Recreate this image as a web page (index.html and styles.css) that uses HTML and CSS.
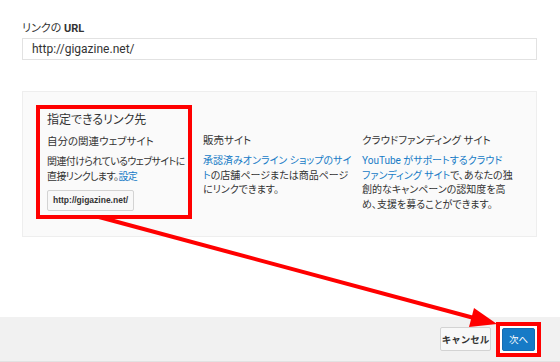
FILE: index.html
```html
<!DOCTYPE html>
<html lang="ja">
<head>
    <meta charset="UTF-8">
    <meta name="viewport" content="width=device-width, initial-scale=1.0">
    <title>リンクの URL</title>
    <link rel="stylesheet" href="styles.css">
</head>
<body>
    <div class="content">
        <div class="field-label">リンクの <strong>URL</strong></div>
        <div class="url-input">http://gigazine.net/</div>

        <!-- Link targets -->
        <div class="panel">
            <div class="option col-highlight">
                <div class="options-title">指定できるリンク先</div>
                <div class="option-name">自分の関連ウェブサイト</div>
                <div class="option-desc">関連付けられているウェブサイトに<br>直接リンクします。<a href="#">設定</a></div>
                <span class="url-chip">http://gigazine.net/</span>
            </div>
            <div class="option col-plain">
                <div class="option-name">販売サイト</div>
                <div class="option-desc"><a href="#">承認済みオンライン ショップのサイ<br>ト</a>の店舗ページまたは商品ページ<br>にリンクできます。</div>
            </div>
            <div class="option col-plain">
                <div class="option-name">クラウドファンディング サイト</div>
                <div class="option-desc"><a href="#">YouTube がサポートするクラウド<br>ファンディング サイト</a>で、あなたの独<br>創的なキャンペーンの認知度を高<br>め、支援を募ることができます。</div>
            </div>
        </div>
    </div>

    <div class="footer">
        <button class="btn btn-cancel">キャンセル</button>
        <div class="next-frame">
            <button class="btn btn-next">次へ</button>
        </div>
    </div>

    <!-- annotation arrow -->
    <svg class="arrow" width="560" height="362" viewBox="0 0 560 362">
        <line x1="99" y1="217" x2="474" y2="318" stroke="#ff0000" stroke-width="4"/>
        <polygon points="497,324 469,327 474,308" fill="#ff0000"/>
    </svg>
</body>
</html>
```

FILE: styles.css
```css
body {
    margin: 0;
    position: relative;
    font-family: Roboto, "Noto Sans CJK JP", sans-serif;
    font-size: 11px;
    color: #333;
    background: #fff;
    font-feature-settings: "palt";
}

a {
    color: #167ac6;
    text-decoration: none;
}

.content {
    height: 317px;
    box-sizing: border-box;
    padding: 22px 23px 0 22px;
}

.field-label {
    line-height: 14px;
}

.field-label strong {
    font-weight: bold;
}

.url-input {
    margin-top: 2px;
    height: 22px;
    box-sizing: border-box;
    border: 1px solid #e2e2e2;
    padding-left: 9px;
    font-size: 12px;
    line-height: 20px;
    color: #333;
}

.panel {
    margin-top: 31px;
    height: 146px;
    box-sizing: border-box;
    background: #fafafa;
    border: 1px solid #eeeeee;
    padding: 13px 0 0 13px;
    display: grid;
    grid-template-columns: 156px 148px 148px;
    column-gap: 11px;
    align-items: start;
}

.col-highlight {
    box-sizing: border-box;
    border: 4px solid #ff0000;
    padding: 3px 0 4px 7px;
}

.col-plain {
    padding-top: 22px;
}

.options-title {
    font-size: 12px;
    line-height: 16px;
}

.option-name {
    margin-top: 6px;
    font-size: 10.5px;
    line-height: 15px;
    white-space: nowrap;
}

.option-desc {
    margin-top: 6px;
    font-size: 10px;
    line-height: 14.5px;
    white-space: nowrap;
}

.col-highlight .option-desc {
    letter-spacing: -0.6px;
}

.url-chip {
    display: inline-block;
    margin-top: 6px;
    height: 21px;
    box-sizing: border-box;
    padding: 0 5px;
    border: 1px solid #d3d3d3;
    border-radius: 2px;
    background: #f8f8f8;
    font-family: "Liberation Sans", Arial, sans-serif;
    font-size: 8.5px;
    font-weight: bold;
    line-height: 19px;
}

.footer {
    height: 45px;
    box-sizing: border-box;
    background: #f1f1f1;
    border-bottom: 1px solid #e2e2e2;
    display: flex;
    justify-content: flex-end;
    align-items: center;
    gap: 5px;
    padding-right: 19px;
}

.btn {
    font-family: inherit;
    font-size: 9.5px;
    border-radius: 2px;
    cursor: pointer;
    box-sizing: border-box;
    white-space: nowrap;
}

.btn-cancel {
    height: 24px;
    width: 51px;
    padding: 0;
    border: 1px solid #d3d3d3;
    background: #f8f8f8;
    color: #333;
    font-weight: bold;
}

.next-frame {
    border: 4px solid #ff0000;
    padding: 2px;
    background: #fff;
    display: flex;
}

.btn-next {
    height: 23px;
    width: 33px;
    padding: 0;
    border: 1px solid #126db3;
    background: #167ac6;
    color: #fff;
}

.arrow {
    position: absolute;
    top: 0;
    left: 0;
    pointer-events: none;
}
```
